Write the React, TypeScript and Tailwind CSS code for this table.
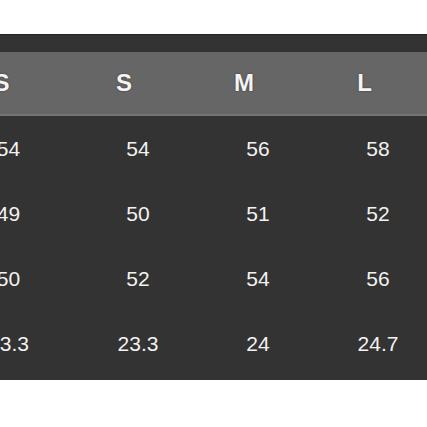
const header = ["S", "S", "M", "L"];

const rows = [
  ["54", "54", "56", "58"],
  ["49", "50", "51", "52"],
  ["50", "52", "54", "56"],
  ["23.3", "23.3", "24", "24.7"],
];

export default function App() {
  return (
    <div
      className="h-[427px] w-[427px] overflow-hidden bg-white pt-[34px]"
      style={{ fontFamily: '"Liberation Sans", Arial, sans-serif' }}
    >
      <div className="bg-[#333333] border-t border-[#242424]">
        <div className="h-[17px]" />
        <div className="h-[64px] bg-[#666666] border-b-2 border-[#747474]">
          <div className="ml-[-61px] grid h-full grid-cols-[125px_120px_120px_121px] items-center">
            {header.map((h, i) => (
              <div
                key={i}
                className="text-center text-[24px] font-bold leading-none text-[#f4f4f4] [text-shadow:0_0_2px_rgba(0,0,0,0.5)]"
              >
                {h}
              </div>
            ))}
          </div>
        </div>
        <div className="pb-[4px]">
          {rows.map((r, ri) => (
            <div
              key={ri}
              className="ml-[-61px] grid h-[65px] grid-cols-[139px_120px_120px_120px] items-center"
            >
              {r.map((c, ci) => (
                <div key={ci} className="text-center text-[21px] leading-none text-[#f2f2f2]">
                  {c}
                </div>
              ))}
            </div>
          ))}
        </div>
      </div>
    </div>
  );
}
